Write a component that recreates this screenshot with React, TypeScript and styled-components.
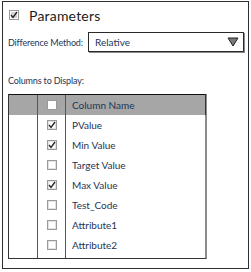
import React from "react"
import styled, { createGlobalStyle } from "styled-components"

const Global = createGlobalStyle`
  html, body {
    margin: 0;
    padding: 0;
    background: #ffffff;
  }
  body {
    font-family: Lato, "Open Sans", sans-serif;
  }
`

const columns = [
  { name: "PValue", checked: true },
  { name: "Min Value", checked: true },
  { name: "Target Value", checked: false },
  { name: "Max Value", checked: true },
  { name: "Test_Code", checked: false },
  { name: "Attribute1", checked: false },
  { name: "Attribute2", checked: false },
]

const Check: React.FC<{ checked?: boolean; filled?: boolean; dim?: boolean }> = ({
  checked,
  filled,
  dim,
}) => (
  <Box $filled={filled} $dim={dim}>
    {checked && (
      <svg width="8" height="8" viewBox="0 0 8 8">
        <path d="M1 4 L3 6.5 L7 1" fill="none" stroke="#222" strokeWidth="1.3" />
      </svg>
    )}
  </Box>
)

const App: React.FC = () => (
  <>
    <Global />
    <Panel>
      <Header>
        <Check checked filled />
        <Title>Parameters</Title>
      </Header>
      <FieldRow>
        <Label>Difference Method:</Label>
        <Select>
          <span>Relative</span>
          <svg width="12" height="10" viewBox="0 0 12 10">
            <path d="M1 1 L11 1 L6 9 Z" fill="#7a7a7a" stroke="#222" strokeWidth="1" />
          </svg>
        </Select>
      </FieldRow>
      <Section>Columns to Display:</Section>
      <Table>
        <HeadRow>
          <Cell />
          <CheckCell>
            <Check />
          </CheckCell>
          <NameCell>Column Name</NameCell>
        </HeadRow>
        {columns.map((c) => (
          <Row key={c.name}>
            <Cell />
            <CheckCell>
              <Check checked={c.checked} dim />
            </CheckCell>
            <NameCell>{c.name}</NameCell>
          </Row>
        ))}
        <Filler>
          <Cell />
          <CheckCell />
          <NameCell />
        </Filler>
      </Table>
    </Panel>
  </>
)

const Panel = styled.div`
  box-sizing: border-box;
  width: 247px;
  height: 268px;
  margin: 1px 0 0 2px;
  border: 1.5px solid #2e2e2e;
  padding: 5px 6px 0 4px;
`

const Header = styled.div`
  display: flex;
  align-items: center;
  gap: 10px;
  padding-left: 2px;
  height: 16px;
`

const Box = styled.span<{ $filled?: boolean; $dim?: boolean }>`
  box-sizing: border-box;
  display: inline-flex;
  align-items: center;
  justify-content: center;
  width: 10px;
  height: 10px;
  border: 1px solid #9a9a9a;
  background: ${(p) => (p.$filled ? "#d6d6d6" : "#fff")};
  box-shadow: inset 0 0 0 1px ${(p) => (p.$dim ? "#e2e2e2" : "#fff")};
  svg {
    display: block;
  }
`

const Title = styled.span`
  font-size: 14px;
  color: #1c1c1c;
  letter-spacing: 0.2px;
`

const FieldRow = styled.div`
  display: flex;
  align-items: center;
  margin-top: 9px;
`

const Label = styled.span`
  flex: 0 0 80px;
  white-space: nowrap;
  font-size: 9px;
  letter-spacing: -0.15px;
  color: #1e3556;
  padding-left: 1px;
`

const Section = styled(Label)`
  display: block;
  margin-top: 23px;
`

const Select = styled.div`
  box-sizing: border-box;
  flex: 0 0 156px;
  display: flex;
  align-items: center;
  justify-content: space-between;
  height: 20px;
  border: 1px solid #2a2a2a;
  box-shadow: 1px 1px 0 #8a8a8a;
  padding: 0 4px 0 6px;
  font-size: 10px;
  color: #1e3556;
`

const Table = styled.div`
  box-sizing: border-box;
  width: 199px;
  margin: 8px 0 0 1px;
  border-left: 1px solid #333;
  border-bottom: 1px solid #333;
  border-right: 2px solid #8c8c8c;
`

const Row = styled.div`
  display: grid;
  grid-template-columns: 29px 28px 1fr;
  height: 20px;
`

const HeadRow = styled(Row)`
  height: 21px;
  background: #a6a6a6;
  border-top: 1px solid #111;
  border-right: 1px solid #333;
  margin-right: -1px;
  box-sizing: border-box;
`

const Filler = styled(Row)`
  height: 3px;
`

const Cell = styled.div`
  border-right: 1px solid #555;
`

const CheckCell = styled(Cell)`
  display: flex;
  align-items: center;
  justify-content: center;
`

const NameCell = styled.div`
  display: flex;
  align-items: center;
  padding-left: 6px;
  font-size: 10px;
  color: #1e3556;
`

export default App
